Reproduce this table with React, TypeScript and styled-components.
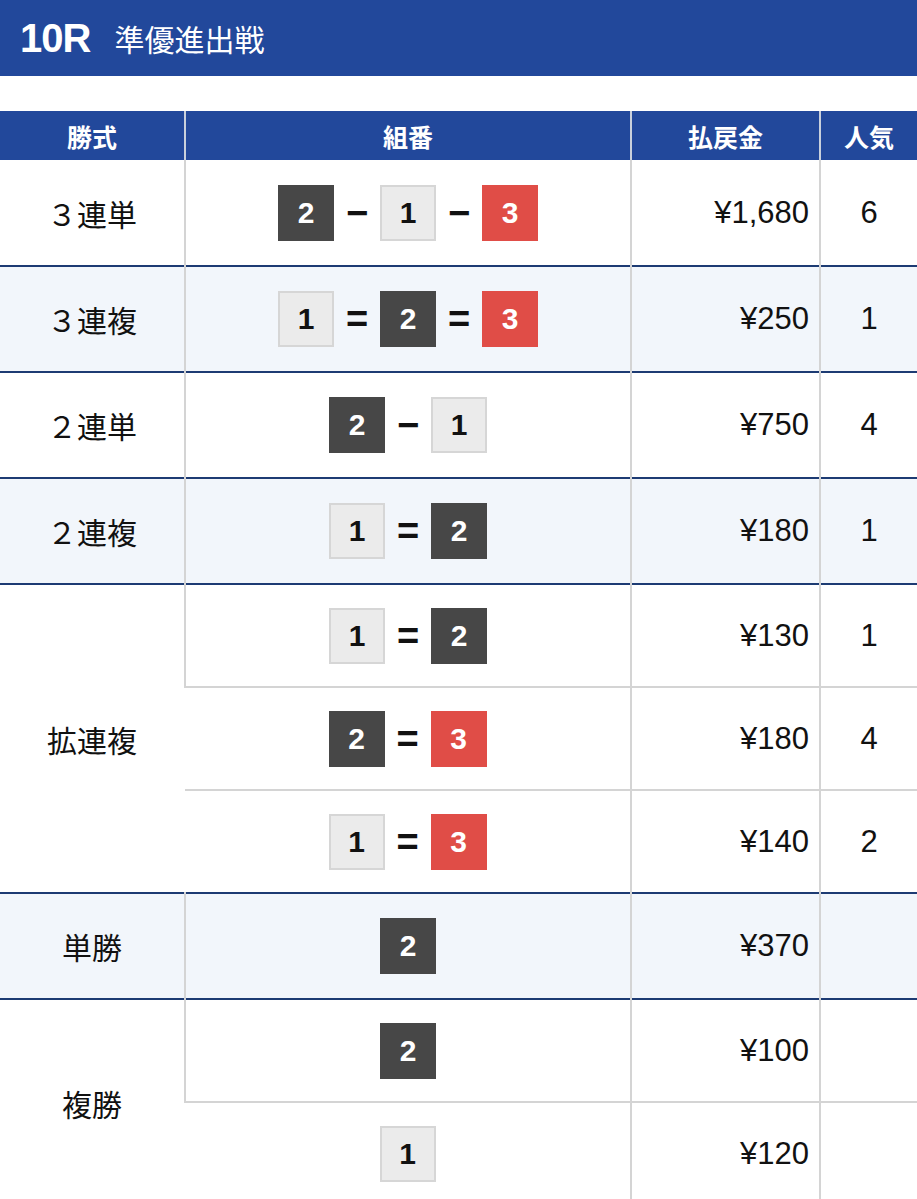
import React from "react";
import styled, { createGlobalStyle } from "styled-components";

const GlobalStyle = createGlobalStyle`
    body {
        margin: 0;
        background: #fff;
        font-family: "Liberation Sans", "Noto Sans CJK JP", sans-serif;
    }
`;

const Page = styled.div`
    width: 917px;
`;

const TitleBar = styled.div`
    height: 76px;
    background: #22489b;
    display: flex;
    align-items: center;
    padding-left: 20px;
    gap: 24px;
    color: #fff;
`;

const RaceNo = styled.span`
    font-size: 40px;
    font-weight: bold;
    letter-spacing: -1px;
`;

const RaceName = styled.span`
    font-family: "Noto Sans CJK JP", sans-serif;
    font-size: 30px;
    font-weight: 400;
`;

const Spacer = styled.div`
    height: 35px;
`;

const Table = styled.table`
    width: 917px;
    border-collapse: collapse;
    table-layout: fixed;
`;

const Th = styled.th`
    height: 49px;
    padding: 0;
    background: #22489b;
    color: #fff;
    font-family: "Noto Sans CJK JP", sans-serif;
    font-size: 25px;
    font-weight: bold;
    border-left: 2px solid #c9d0dc;
    &:first-child {
        border-left: none;
    }
`;

const Row = styled.tr<{ $alt?: boolean; $line: "none" | "group" | "inner"; $tall?: boolean }>`
    height: ${(p) => (p.$tall ? 106 : 103)}px;
    background: ${(p) => (p.$alt ? "#f2f6fb" : "#fff")};
    border-top: ${(p) =>
        p.$line === "none" ? "none" : `2px solid ${p.$line === "group" ? "#1d3b73" : "#d4d4d4"}`};
`;

const Td = styled.td`
    padding: 0;
    border-left: 2px solid #d4d4d4;
    text-align: center;
    vertical-align: middle;
    font-size: 31px;
    color: #111;
    &:first-child {
        border-left: none;
    }
`;

const TypeCell = styled(Td)`
    font-family: "Noto Sans CJK JP", sans-serif;
    font-size: 30px;
    font-weight: 400;
`;

const PayCell = styled(Td)`
    text-align: right;
    padding-right: 10px;
`;

const Combo = styled.div`
    display: flex;
    justify-content: center;
    align-items: center;
`;

const Badge = styled.span<{ $kind: "dark" | "light" | "red" }>`
    width: 56px;
    height: 56px;
    box-sizing: border-box;
    display: flex;
    align-items: center;
    justify-content: center;
    font-size: 30px;
    font-weight: bold;
    color: ${(p) => (p.$kind === "light" ? "#111" : "#fff")};
    background: ${(p) =>
        p.$kind === "dark" ? "#474747" : p.$kind === "red" ? "#e04d47" : "#ebebeb"};
    border: ${(p) => (p.$kind === "light" ? "2px solid #d6d6d6" : "none")};
`;

const Sep = styled.span`
    width: 46px;
    text-align: center;
    font-size: 38px;
    font-weight: bold;
    color: #111;
    line-height: 1;
`;

const kindOf = (n: number) => (n === 1 ? "light" : n === 2 ? "dark" : "red");

type Entry = { nums: number[]; sep: string; pay: string; pop: string };
type Group = { name: string; alt: boolean; entries: Entry[] };

const groups: Group[] = [
    { name: "３連単", alt: false, entries: [{ nums: [2, 1, 3], sep: "−", pay: "¥1,680", pop: "6" }] },
    { name: "３連複", alt: true, entries: [{ nums: [1, 2, 3], sep: "=", pay: "¥250", pop: "1" }] },
    { name: "２連単", alt: false, entries: [{ nums: [2, 1], sep: "−", pay: "¥750", pop: "4" }] },
    { name: "２連複", alt: true, entries: [{ nums: [1, 2], sep: "=", pay: "¥180", pop: "1" }] },
    {
        name: "拡連複",
        alt: false,
        entries: [
            { nums: [1, 2], sep: "=", pay: "¥130", pop: "1" },
            { nums: [2, 3], sep: "=", pay: "¥180", pop: "4" },
            { nums: [1, 3], sep: "=", pay: "¥140", pop: "2" },
        ],
    },
    { name: "単勝", alt: true, entries: [{ nums: [2], sep: "", pay: "¥370", pop: "" }] },
    {
        name: "複勝",
        alt: false,
        entries: [
            { nums: [2], sep: "", pay: "¥100", pop: "" },
            { nums: [1], sep: "", pay: "¥120", pop: "" },
        ],
    },
];

const App = () => {
    return (
        <Page>
            <GlobalStyle />
            <TitleBar>
                <RaceNo>10R</RaceNo>
                <RaceName>準優進出戦</RaceName>
            </TitleBar>
            <Spacer />
            <Table>
                <colgroup>
                    <col style={{ width: 185 }} />
                    <col style={{ width: 446 }} />
                    <col style={{ width: 189 }} />
                    <col style={{ width: 97 }} />
                </colgroup>
                <thead>
                    <tr>
                        <Th>勝式</Th>
                        <Th>組番</Th>
                        <Th>払戻金</Th>
                        <Th>人気</Th>
                    </tr>
                </thead>
                <tbody>
                    {groups.map((g, gi) =>
                        g.entries.map((e, ei) => (
                            <Row
                                key={`${gi}-${ei}`}
                                $alt={g.alt}
                                $line={gi === 0 && ei === 0 ? "none" : ei === 0 ? "group" : "inner"}
                                $tall={g.entries.length === 1}
                            >
                                {ei === 0 && (
                                    <TypeCell rowSpan={g.entries.length}>{g.name}</TypeCell>
                                )}
                                <Td>
                                    <Combo>
                                        {e.nums.map((n, i) => (
                                            <React.Fragment key={i}>
                                                {i > 0 && <Sep>{e.sep}</Sep>}
                                                <Badge $kind={kindOf(n)}>{n}</Badge>
                                            </React.Fragment>
                                        ))}
                                    </Combo>
                                </Td>
                                <PayCell>{e.pay}</PayCell>
                                <Td>{e.pop}</Td>
                            </Row>
                        ))
                    )}
                </tbody>
            </Table>
        </Page>
    );
};

export default App;
